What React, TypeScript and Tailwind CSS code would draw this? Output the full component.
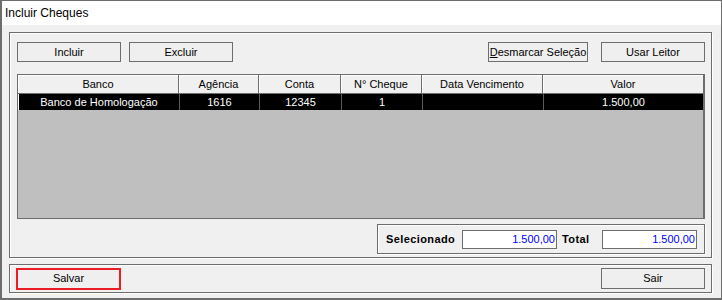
import React from "react";

const columns = [
  { title: "Banco", width: "w-[161px]" },
  { title: "Agência", width: "w-[80px]" },
  { title: "Conta", width: "w-[82px]" },
  { title: "N° Cheque", width: "w-[81px]" },
  { title: "Data Vencimento", width: "w-[121px]" },
  { title: "Valor", width: "flex-1" },
];

const row = ["Banco de Homologação", "1616", "12345", "1", "", "1.500,00"];

function Button({ children, className = "" }: { children: React.ReactNode; className?: string }) {
  return (
    <button
      className={`h-[20px] border border-[#6d6d6d] bg-[#efefef] text-[11px] leading-none text-black ${className}`}
    >
      {children}
    </button>
  );
}

function MoneyBox({ value }: { value: string }) {
  return (
    <div className="h-[19px] w-[95px] border border-[#6d6d6d] bg-white pr-[1px] text-right text-[11px] leading-[17px] text-[#0000ff]">
      {value}
    </div>
  );
}

export default function App() {
  return (
    <div
      className="flex h-[300px] w-[722px] flex-col border-t border-r border-l-2 border-b-2 border-[#6d6d6d] bg-white text-black"
      style={{ fontFamily: '"Liberation Sans", Arial, sans-serif' }}
    >
      <div className="flex h-[24px] items-center bg-white pl-[3px] text-[12px]">Incluir Cheques</div>

      <div className="flex flex-1 flex-col bg-[#f0f0f0] pl-[7px] pr-[9px] pt-[7px]">
        {/* painel principal */}
        <div className="flex h-[226px] flex-col border border-[#6d6d6d] pl-[7px] pr-[6px] pt-[9px] shadow-[1px_1px_0_#ffffff,inset_1px_1px_0_#ffffff]">
          <div className="flex h-[20px] items-center">
            <Button className="w-[104px]">Incluir</Button>
            <Button className="ml-[8px] w-[104px]">Excluir</Button>
            <Button className="ml-auto w-[100px]">
              <span className="underline">D</span>esmarcar Seleção
            </Button>
            <Button className="ml-[13px] w-[104px]">Usar Leitor</Button>
          </div>

          <div className="mt-[12px] flex h-[145px] flex-col border border-[#6d6d6d] border-r-2 bg-[#bfbfbf]">
            <div className="flex h-[19px] border-b border-[#6d6d6d] bg-[#f0f0f0]">
              {columns.map((c) => (
                <div
                  key={c.title}
                  className={`${c.width} flex items-center justify-center border-r border-[#6d6d6d] text-[11px] shadow-[inset_1px_1px_0_#ffffff] last:border-r-0`}
                >
                  {c.title}
                </div>
              ))}
            </div>
            <div className="flex h-[16px] border-l border-white bg-black">
              {columns.map((c, i) => (
                <div
                  key={c.title}
                  className={`${c.width} flex items-center justify-center border-r border-[#5a5a5a] text-[11px] leading-none text-white last:border-r-0`}
                >
                  {row[i]}
                </div>
              ))}
            </div>
          </div>

          <div className="ml-auto mt-[5px] flex h-[30px] w-[328px] items-center border border-[#6d6d6d] pl-[8px] pr-[7px] shadow-[1px_1px_0_#ffffff,inset_1px_1px_0_#ffffff]">
            <span className="w-[76px] text-[11px] font-bold tracking-[0.4px]">Selecionado</span>
            <MoneyBox value="1.500,00" />
            <span className="ml-[5px] w-[40px] text-[11px] font-bold tracking-[0.4px]">Total</span>
            <MoneyBox value="1.500,00" />
          </div>
        </div>

        {/* rodapé */}
        <div className="mt-[6px] flex h-[29px] items-center border border-[#6d6d6d] pl-[6px] pr-[6px] shadow-[1px_1px_0_#ffffff,inset_1px_1px_0_#ffffff]">
          <button className="h-[22px] w-[105px] border-2 border-[#ed1c24] bg-[#efefef] text-[11px] leading-none">
            Salvar
          </button>
          <Button className="ml-auto h-[21px] w-[104px]">Sair</Button>
        </div>
      </div>
    </div>
  );
}
